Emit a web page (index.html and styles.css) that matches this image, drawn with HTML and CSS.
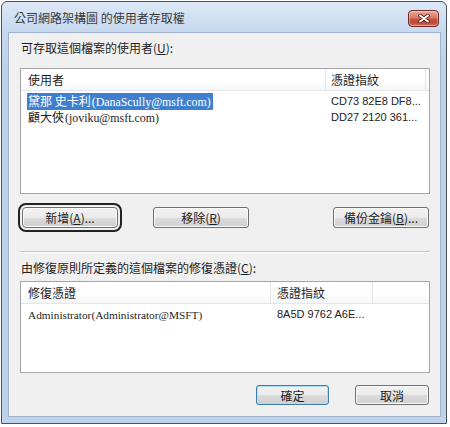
FILE: index.html
```html
<!DOCTYPE html>
<html lang="zh-Hant">
<head>
  <meta charset="UTF-8" />
  <title>公司網路架構圖 的使用者存取權</title>
  <link rel="stylesheet" href="styles.css">
</head>
<body>
  <div class="window">
    <div class="titlebar">
      <span class="title">公司網路架構圖 的使用者存取權</span>
      <div class="close-btn">
        <svg width="12" height="9" viewBox="0 0 12 9">
          <path d="M2 1.5 L10 7.5 M10 1.5 L2 7.5" stroke="#5a1f1a" stroke-width="3.6" stroke-linecap="round"/>
          <path d="M2 1.5 L10 7.5 M10 1.5 L2 7.5" stroke="#fff" stroke-width="2" stroke-linecap="round"/>
        </svg>
      </div>
    </div>

    <div class="content">
      <div class="label">可存取這個檔案的使用者(<u>U</u>):</div>

      <div class="listview users">
        <div class="lv-header">
          <div class="col c1">使用者</div>
          <div class="col c2">憑證指紋</div>
          <div class="col rest"></div>
        </div>
        <div class="lv-row">
          <div class="cell c1"><span class="name sel">黛那 史卡利<span class="latin">(DanaScully@msft.com)</span></span></div>
          <div class="cell c2 hash">CD73 82E8 DF8...</div>
        </div>
        <div class="lv-row">
          <div class="cell c1"><span class="name">顧大俠<span class="latin">(joviku@msft.com)</span></span></div>
          <div class="cell c2 hash">DD27 2120 361...</div>
        </div>
      </div>

      <div class="btn-row">
        <button class="btn focused">新增(<u>A</u>)...</button>
        <button class="btn">移除(<u>R</u>)</button>
        <button class="btn push-right">備份金鑰(<u>B</u>)...</button>
      </div>

      <div class="separator"></div>

      <div class="label">由修復原則所定義的這個檔案的修復憑證(<u>C</u>):</div>

      <div class="listview recovery">
        <div class="lv-header">
          <div class="col c1">修復憑證</div>
          <div class="col c2">憑證指紋</div>
          <div class="col rest"></div>
        </div>
        <div class="lv-row">
          <div class="cell c1"><span class="name latin">Administrator(Administrator@MSFT)</span></div>
          <div class="cell c2 hash">8A5D 9762 A6E...</div>
        </div>
      </div>

      <div class="dialog-buttons">
        <button class="btn small default">確定</button>
        <button class="btn small">取消</button>
      </div>
    </div>
  </div>
</body>
</html>
```

FILE: styles.css
```css
* { box-sizing: border-box; }
body {
  margin: 0;
  background: #fff;
  font-family: "Noto Sans CJK TC", "Noto Sans", sans-serif;
  font-size: 12px;
  color: #1e1e1e;
}
.window {
  width: 446px;
  height: 423px;
  margin: 1px 0 0 1px;
  border: 1px solid #4a5260;
  border-radius: 6px 6px 0 0;
  background: linear-gradient(#dce8f6 0px, #c6d9ef 30px, #bed2ea 60px, #bed2ea 100%);
  padding: 0 5px 6px 6px;
  display: flex;
  flex-direction: column;
  box-shadow: 0 1px 0 #3c8a92;
}
.titlebar {
  height: 30px;
  display: flex;
  align-items: center;
  padding-left: 6px;
  padding-top: 1px;
}
.title {
  flex: 1;
  color: #3a3a3a;
  font-size: 12px;
  line-height: 16px;
}
.close-btn {
  width: 31px;
  height: 17px;
  margin-right: 2px;
  margin-top: 1px;
  border: 1px solid #6e2b23;
  border-radius: 4px;
  background: linear-gradient(#e9a99c 0%, #d67a68 45%, #c5503b 55%, #c0493a 80%, #d87a62 100%);
  box-shadow: inset 0 0 0 1px rgba(255,255,255,0.35);
  display: flex;
  align-items: center;
  justify-content: center;
}
.content {
  flex: 1;
  background: #f0f0f0;
  border: 1px solid #9fb2c9;
  padding: 7px 10px 0 11px;
  display: flex;
  flex-direction: column;
}
.label {
  line-height: 16px;
  height: 16px;
  padding-left: 1px;
}
.listview {
  background: #fff;
  border: 1px solid #a5a5a5;
  width: 410px;
}
.listview.users { height: 126px; margin-top: 12px; }
.listview.recovery { height: 92px; margin-top: 5px; }
.lv-header {
  display: flex;
  height: 22px;
  background: linear-gradient(#ffffff 0%, #ffffff 55%, #f6f7f8 100%);
  border-bottom: 1px solid #e3e6ea;
}
.col {
  line-height: 21px;
  border-right: 1px solid #e3e5e8;
}
.col.rest { flex: 1; border-right: none; }
.users .c1 { width: 305px; }
.users .c2 { width: 100px; }
.recovery .c1 { width: 250px; }
.recovery .c2 { width: 102px; }
.lv-header .c1 { padding-left: 7px; }
.users .lv-header .c2 { padding-left: 5px; }
.recovery .lv-header .c2 { padding-left: 6px; }
.lv-row {
  display: flex;
  height: 16px;
  line-height: 16px;
}
.lv-header + .lv-row { margin-top: 2px; }
.cell { border-right: 1px solid transparent; white-space: nowrap; }
.cell.c1 { padding-left: 6px; }
.users .cell.c2 { padding-left: 5px; }
.recovery .cell.c2 { padding-left: 6px; }
.name { padding: 0 2px 0 1px; display: inline-block; }
.latin {
  font-family: "Liberation Serif", "Noto Sans CJK TC", serif;
  font-size: 11.3px;
}
.users .latin { font-size: 11.9px; margin-left: 1px; }
.sel {
  background: #3f7fcf;
  color: #fff;
}
.hash {
  font-family: "Liberation Sans", sans-serif;
  font-size: 11px;
  color: #222;
}
.btn-row {
  display: flex;
  gap: 35px;
  margin-top: 13px;
  padding: 0 1px 0 2px;
  width: 410px;
}
.btn {
  width: 96px;
  height: 21px;
  padding: 0;
  border: 1px solid #707070;
  border-radius: 3px;
  background: linear-gradient(#f2f2f2 0%, #ebebeb 50%, #dddddd 50%, #cfcfcf 100%);
  box-shadow: inset 0 0 0 1px #fafafa;
  font-family: "Noto Sans CJK TC", sans-serif;
  font-size: 12px;
  line-height: 18px;
  color: #1e1e1e;
}
.btn.push-right { margin-left: auto; }
.btn.focused {
  outline: 2px solid #222;
  outline-offset: 2px;
  border-radius: 4px;
}
.separator {
  height: 2px;
  width: 410px;
  margin-top: 23px;
  border-top: 1px solid #c6c6c6;
  border-bottom: 1px solid #fff;
}
.separator + .label { margin-top: 7px; }
.dialog-buttons {
  display: flex;
  justify-content: flex-end;
  gap: 26px;
  width: 409px;
  margin-top: 12px;
}
.btn.small { width: 73px; height: 20px; line-height: 17px; }
.btn.small:last-child { width: 74px; }
.btn.default {
  border-color: #3c7fb1;
  box-shadow: inset 0 0 0 1px #a9dcf6;
}
```
